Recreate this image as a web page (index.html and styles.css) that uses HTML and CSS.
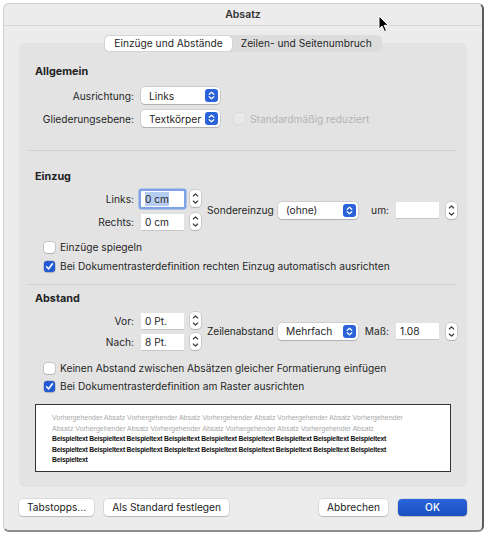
FILE: index.html
```html
<!DOCTYPE html>
<html lang="de">
<head>
    <meta charset="UTF-8">
    <title>Absatz</title>
    <link rel="stylesheet" href="styles.css">
</head>
<body>
    <div class="window">
        <div class="titlebar">Absatz</div>

        <!-- Tabs -->
        <div class="tabs">
            <div class="tab-group">
                <span class="tab active">Einzüge und Abstände</span>
                <span class="tab">Zeilen- und Seitenumbruch</span>
            </div>
        </div>

        <div class="panel">
            <!-- Allgemein -->
            <div class="heading">Allgemein</div>
            <div class="rows">
                <div class="row">
                    <span class="label">Ausrichtung:</span>
                    <span class="popup">Links<span class="popup-arrows"></span></span>
                </div>
                <div class="row">
                    <span class="label">Gliederungsebene:</span>
                    <span class="popup">Textkörper<span class="popup-arrows"></span></span>
                    <span class="check disabled"><span class="box"></span>Standardmäßig reduziert</span>
                </div>
            </div>

            <div class="sep sep-first"></div>

            <!-- Einzug -->
            <div class="heading heading-einzug">Einzug</div>
            <div class="group">
                <div class="rows">
                    <div class="row">
                        <span class="label">Links:</span>
                        <span class="field focused"><span class="selected">0 cm</span></span>
                        <span class="stepper"></span>
                    </div>
                    <div class="row">
                        <span class="label">Rechts:</span>
                        <span class="field">0 cm</span>
                        <span class="stepper"></span>
                    </div>
                </div>
                <div class="side">
                    <span class="side-label">Sondereinzug</span>
                    <span class="popup wide">(ohne)<span class="popup-arrows"></span></span>
                    <span class="unit-label">um:</span>
                    <span class="field"></span>
                    <span class="stepper"></span>
                </div>
            </div>
            <div class="checks">
                <div class="check"><span class="box"></span>Einzüge spiegeln</div>
                <div class="check"><span class="box on"></span>Bei Dokumentrasterdefinition rechten Einzug automatisch ausrichten</div>
            </div>

            <div class="sep sep-second"></div>

            <!-- Abstand -->
            <div class="heading heading-abstand">Abstand</div>
            <div class="group">
                <div class="rows tight">
                    <div class="row">
                        <span class="label">Vor:</span>
                        <span class="field">0 Pt.</span>
                        <span class="stepper"></span>
                    </div>
                    <div class="row">
                        <span class="label">Nach:</span>
                        <span class="field">8 Pt.</span>
                        <span class="stepper"></span>
                    </div>
                </div>
                <div class="side">
                    <span class="side-label tight-label">Zeilenabstand</span>
                    <span class="popup wide">Mehrfach<span class="popup-arrows"></span></span>
                    <span class="unit-label">Maß:</span>
                    <span class="field">1.08</span>
                    <span class="stepper"></span>
                </div>
            </div>
            <div class="checks checks-abstand">
                <div class="check"><span class="box"></span>Keinen Abstand zwischen Absätzen gleicher Formatierung einfügen</div>
                <div class="check"><span class="box on"></span>Bei Dokumentrasterdefinition am Raster ausrichten</div>
            </div>

            <!-- Vorschau -->
            <div class="preview">
                <div class="prev-line grey">Vorhergehender Absatz Vorhergehender Absatz Vorhergehender Absatz Vorhergehender Absatz Vorhergehender</div>
                <div class="prev-line grey">Absatz Vorhergehender Absatz Vorhergehender Absatz Vorhergehender Absatz Vorhergehender Absatz</div>
                <div class="prev-line">Beispieltext Beispieltext Beispieltext Beispieltext Beispieltext Beispieltext Beispieltext Beispieltext Beispieltext</div>
                <div class="prev-line">Beispieltext Beispieltext Beispieltext Beispieltext Beispieltext Beispieltext Beispieltext Beispieltext Beispieltext</div>
                <div class="prev-line">Beispieltext</div>
            </div>
        </div>

        <!-- Buttons -->
        <div class="buttons">
            <span class="btn">Tabstopps...</span>
            <span class="btn">Als Standard festlegen</span>
            <span class="spacer"></span>
            <span class="btn">Abbrechen</span>
            <span class="btn primary">OK</span>
        </div>
    </div>

    <svg class="cursor" width="12" height="18" viewBox="0 0 12 18">
        <path d="M1 1 L1 14 L4 11 L6.5 16.5 L8.5 15.6 L6.1 10.3 L10.3 10.3 Z" fill="#000" stroke="#fff" stroke-width="1"/>
    </svg>
</body>
</html>
```

FILE: styles.css
```css
body {
    margin: 0;
    background: #ffffff;
    font-family: "Inter", "Noto Sans", sans-serif;
    font-size: 10.2px;
    color: #262626;
}

.window {
    margin: 3px 0 0 3px;
    width: 478px;
    height: 526px;
    background: #ececec;
    border: 1px solid #cfcfcf;
    border-right: 2px solid #5c5c5c;
    border-bottom: 2px solid #8e8e8e;
    border-radius: 6px;
}

.titlebar {
    height: 21px;
    line-height: 21px;
    text-align: center;
    font-weight: 600;
    font-size: 10.5px;
    color: #333333;
    border-bottom: 1px solid #d6d6d6;
}

.tabs {
    display: flex;
    justify-content: center;
    margin-top: 9px;
    margin-bottom: -9px;
    position: relative;
}

.tab-group {
    display: flex;
    background: #dcdcdc;
    border-radius: 5px;
    padding: 1px;
    height: 15px;
}

.tab {
    padding: 0 9px;
    line-height: 15px;
    border-radius: 4px;
    color: #262626;
}

.tab.active {
    background: #ffffff;
    box-shadow: 0 0 1px rgba(0, 0, 0, 0.35);
}

.panel {
    margin: 0 15px;
    background: #e3e3e3;
    border-radius: 5px;
    padding: 22px 16px 15px;
}

.heading {
    font-weight: 700;
    font-size: 10.8px;
    line-height: 14px;
    color: #222222;
    margin-bottom: 8px;
}

.heading-einzug {
    margin-top: 19px;
    margin-bottom: 6px;
}

.heading-abstand {
    margin-top: 7px;
    margin-bottom: 6px;
}

.rows {
    display: flex;
    flex-direction: column;
    gap: 6px;
}

.rows.tight {
    gap: 4px;
}

.row {
    display: flex;
    align-items: center;
    height: 17px;
}

.label {
    width: 99px;
    text-align: right;
    margin-right: 7px;
}

.popup {
    display: flex;
    align-items: center;
    justify-content: space-between;
    width: 69px;
    height: 17px;
    padding: 0 2px 0 8px;
    background: #ffffff;
    border-radius: 4px;
    box-shadow: 0 0 0 0.5px rgba(0, 0, 0, 0.18), 0 1px 1px rgba(0, 0, 0, 0.15);
}

.popup.wide {
    width: 70px;
}

.popup-arrows {
    width: 13px;
    height: 13px;
    border-radius: 3px;
    background: #2a62d9 url("data:image/svg+xml,%3Csvg xmlns='http://www.w3.org/2000/svg' width='13' height='13'%3E%3Cpath d='M4.2 5.3 L6.5 3.2 L8.8 5.3 M4.2 7.7 L6.5 9.8 L8.8 7.7' fill='none' stroke='white' stroke-width='1.2' stroke-linecap='round' stroke-linejoin='round'/%3E%3C/svg%3E") no-repeat center;
}

.field {
    display: flex;
    align-items: center;
    width: 39px;
    height: 16px;
    padding-left: 4px;
    background: #ffffff;
    box-shadow: 0 1px 0 rgba(0, 0, 0, 0.12);
}

.field.focused {
    box-shadow: 0 0 0 2.5px #7ea3e6;
    border-radius: 1px;
}

.selected {
    background: #b6cdf3;
    padding: 1px 0;
}

.stepper {
    width: 11px;
    height: 17px;
    margin-left: 6px;
    border-radius: 4px;
    background: #ffffff url("data:image/svg+xml,%3Csvg xmlns='http://www.w3.org/2000/svg' width='11' height='17'%3E%3Cpath d='M3.3 6 L5.5 3.8 L7.7 6 M3.3 11 L5.5 13.2 L7.7 11' fill='none' stroke='%23333' stroke-width='1.1' stroke-linecap='round' stroke-linejoin='round'/%3E%3C/svg%3E") no-repeat center;
    box-shadow: 0 0 0 0.5px rgba(0, 0, 0, 0.2), 0 1px 1px rgba(0, 0, 0, 0.12);
}

.group {
    display: flex;
    align-items: center;
}

.side {
    display: flex;
    align-items: center;
    height: 17px;
}

.side-label {
    width: 71px;
    margin-left: 6px;
    white-space: nowrap;
}

.side-label.tight-label {
    letter-spacing: -0.1px;
}

.unit-label {
    width: 31px;
    padding-right: 7px;
    text-align: right;
}

.side .stepper {
    margin-left: 7px;
}

.check {
    display: flex;
    align-items: center;
    height: 14px;
}

.box {
    width: 11px;
    height: 11px;
    margin-right: 5px;
    border-radius: 3px;
    background: #ffffff;
    box-shadow: 0 0 0 0.5px rgba(0, 0, 0, 0.25), 0 1px 1px rgba(0, 0, 0, 0.1);
}

.box.on {
    background: #225ad6 url("data:image/svg+xml,%3Csvg xmlns='http://www.w3.org/2000/svg' width='11' height='11'%3E%3Cpath d='M2.6 5.8 L4.6 8 L8.4 2.8' fill='none' stroke='white' stroke-width='1.6' stroke-linecap='round' stroke-linejoin='round'/%3E%3C/svg%3E") no-repeat center;
}

.check.disabled {
    color: #b4b4b4;
    margin-left: 14px;
}

.check.disabled .box {
    background: #e9e9e9;
    box-shadow: 0 0 0 0.5px rgba(0, 0, 0, 0.08);
}

.checks {
    display: flex;
    flex-direction: column;
    gap: 5px;
    margin-top: 10px;
    padding-left: 9px;
}

.checks-abstand {
    margin-top: 11px;
    gap: 4px;
}

.sep {
    height: 1px;
    background: #d0d0d0;
    margin: 0 -6px 0 -7px;
}

.sep-first {
    margin-top: 23px;
}

.sep-second {
    margin-top: 11px;
}

.preview {
    margin-top: 11px;
    height: 53px;
    padding: 8px 16px 5px;
    background: #ffffff;
    border: 1px solid #333333;
    font-family: "Liberation Sans", sans-serif;
    font-size: 6.8px;
    color: #111111;
}

.prev-line {
    line-height: 10.6px;
    white-space: nowrap;
    font-weight: 700;
    letter-spacing: -0.21px;
}

.prev-line.grey {
    color: #a9a9a9;
    font-size: 7px;
    font-weight: 400;
    letter-spacing: 0;
}

.buttons {
    display: flex;
    align-items: center;
    gap: 10px;
    margin: 12px 15px 0;
}

.spacer {
    flex: 1;
}

.btn {
    height: 17px;
    line-height: 17px;
    padding: 0 8px;
    background: #ffffff;
    border-radius: 4px;
    box-shadow: 0 0 0 0.5px rgba(0, 0, 0, 0.15), 0 1px 1px rgba(0, 0, 0, 0.15);
    color: #222222;
}

.btn.primary {
    width: 69px;
    padding: 0;
    text-align: center;
    color: #ffffff;
    font-weight: 500;
    background: linear-gradient(#2a64dc, #1b4fbf);
}

.cursor {
    position: absolute;
    left: 378px;
    top: 15px;
}
```
